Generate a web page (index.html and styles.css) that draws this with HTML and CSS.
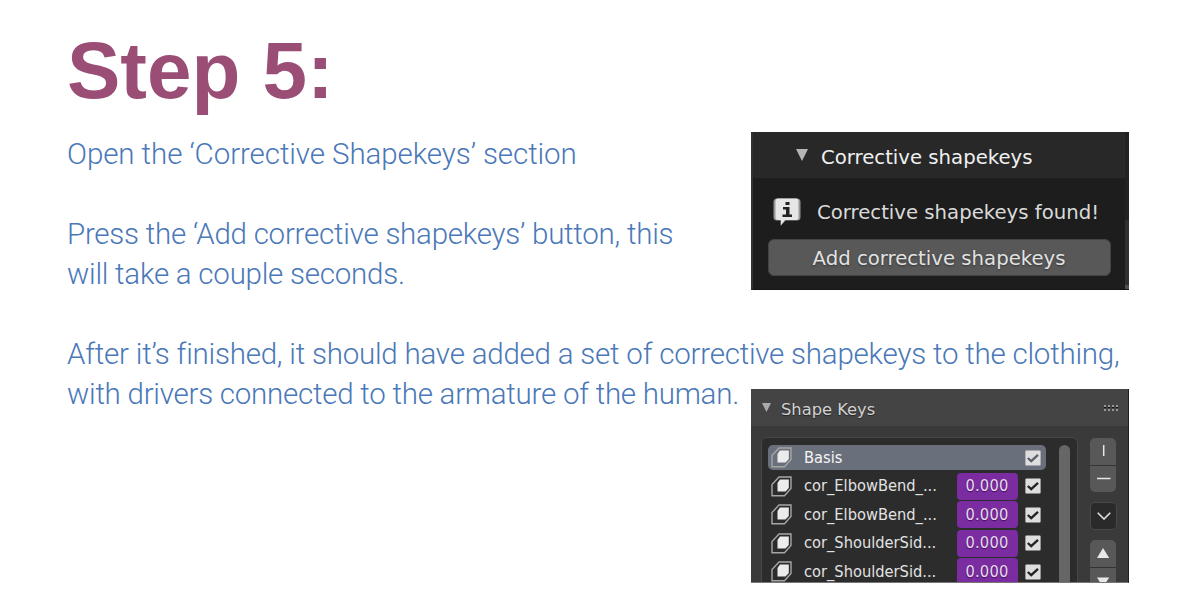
FILE: index.html
```
<!DOCTYPE html>
<html lang="en">
<head>
<meta charset="utf-8">
<title>Step 5</title>
<link rel="stylesheet" href="styles.css">
</head>
<body>
<svg class="defs" width="0" height="0" aria-hidden="true">
  <symbol id="key" viewBox="0 0 21 21"><path d="M1 19.800V8.500L8 1h12v11.500l-6.500 7.300z" fill="none" stroke="#a6a6a6" stroke-width="1.400"/><path d="M9 3.500h8.800v8.500L14.500 15.500H6.500V7z" fill="#ececec"/></symbol>
  <symbol id="check" viewBox="0 0 16 16"><rect x=".4" y=".4" width="15.200" height="15.200" rx="1" fill="#dedede"/><path d="M2.800 8l3.400 3.200L13 4.800" fill="none" stroke="currentColor" stroke-width="2.300"/></symbol>
</svg>
<main class="page">
  <section class="copy">
    <h1 class="title">Step 5:</h1>
    <p class="line l1">Open the ‘Corrective Shapekeys’ section</p>
    <p class="line l2 gap">Press the ‘Add corrective shapekeys’ button, this</p>
    <p class="line l3">will take a couple seconds.</p>
    <p class="line l4 gap">After it’s finished, it should have added a set of corrective shapekeys to the clothing,</p>
    <p class="line l5">with drivers connected to the armature of the human.</p>
  </section>
  <aside class="shots">
    <section class="corrective">
      <div class="corrective-main">
        <header class="corrective-head"><svg width="12" height="12"><path d="M0 0h12L6 12z" fill="#b4b4b4"/></svg><span>Corrective shapekeys</span></header>
        <div class="found">
          <svg width="28" height="29" viewBox="0 0 28 29"><path d="M4 .5h20q3.500 0 3.500 3.500v15q0 3.500-3.500 3.500H12.500L7.500 28v-5.500H4Q.5 22.500.5 19V4Q.5.500 4 .5z" fill="#969696"/><path d="M5 .5h18q2.500 0 2.500 3v16q0 2.500-2.500 2.500H12l-4 5V22H5q-2.500 0-2.500-2.500v-16q0-3 2.500-3z" fill="#e6e6e6"/><path d="M12.500 4h4v3h-4zM10 9h6.500v7.500H19V19H9.500v-2.500H13v-5h-3z" fill="#222"/></svg>
          <span>Corrective shapekeys found!</span>
        </div>
        <div class="add">Add corrective shapekeys</div>
      </div>
      <div class="edge"></div>
    </section>
    <section class="keys">
      <header class="keys-head"><svg width="9" height="9"><path d="M0 0h9L4.500 9z" fill="#aaa"/></svg><span>Shape Keys</span>
        <svg class="grip" width="14" height="6"><path d="M0 1h14M0 5h14" stroke="#b5b5b5" stroke-width="1.500" stroke-dasharray="2 2"/><path d="M0 2.500h14" stroke="#111" stroke-width="1" stroke-dasharray="2 2"/></svg>
      </header>
      <div class="keys-body">
        <div class="list">
          <div class="rows">
            <div class="row on"><svg class="k"><use href="#key"/></svg><span class="name">Basis</span><svg class="c"><use href="#check"/></svg></div>
            <div class="row"><svg class="k"><use href="#key"/></svg><span class="name">cor_ElbowBend_...</span><span class="val">0.000</span><svg class="c"><use href="#check"/></svg></div>
            <div class="row"><svg class="k"><use href="#key"/></svg><span class="name">cor_ElbowBend_...</span><span class="val">0.000</span><svg class="c"><use href="#check"/></svg></div>
            <div class="row"><svg class="k"><use href="#key"/></svg><span class="name">cor_ShoulderSid...</span><span class="val">0.000</span><svg class="c"><use href="#check"/></svg></div>
            <div class="row"><svg class="k"><use href="#key"/></svg><span class="name">cor_ShoulderSid...</span><span class="val">0.000</span><svg class="c"><use href="#check"/></svg></div>
          </div>
          <div class="scroll"></div>
        </div>
        <div class="tools">
          <div class="group">
            <div class="btn"><svg width="26" height="26"><path d="M13.700 7v11" stroke="#e6e6e6" stroke-width="1.500"/></svg></div>
            <div class="btn"><svg width="26" height="27"><path d="M7 12.500h13.500" stroke="#e6e6e6" stroke-width="1.500"/></svg></div>
          </div>
          <div class="drop"><svg width="14" height="8"><path d="M.7.700L7 7l6.300-6.300" fill="none" stroke="#e0e0e0" stroke-width="1.600"/></svg></div>
          <div class="group">
            <div class="btn"><svg width="26" height="26"><path d="M7 18L13 8l6.200 10z" fill="#e8e8e8"/></svg></div>
            <div class="btn"><svg width="26" height="27"><path d="M7 9.500h12.200L13 19z" fill="#e8e8e8"/></svg></div>
          </div>
        </div>
      </div>
    </section>
  </aside>
</main>
</body>
</html>
```
FILE: styles.css
```
*{box-sizing:border-box}
body{margin:0;background:#fff}
svg{display:block;flex:none}
.defs{position:absolute}
.page{width:1200px;height:600px;overflow:hidden;display:grid;grid-template-columns:751px 378px;grid-template-rows:600px}
.copy{grid-area:1/1/2/3;padding:26px 0 0 67px;color:#4a78b8;font:300 29.500px/40px Roboto,sans-serif}
.title{margin:0 0 18px;font:bold 80px/90px "Liberation Sans",sans-serif;color:#9b4e75}
.line{margin:0;margin-right:-40px;white-space:nowrap}
.gap{margin-top:40px}
.l1{letter-spacing:-.08px}
.l2,.l3{letter-spacing:-.24px}
.l4{letter-spacing:-.22px}
.l5{letter-spacing:-.25px}

.shots{grid-area:1/2/2/3;padding-top:132px;display:flex;flex-direction:column;gap:99px;font-family:"DejaVu Sans",sans-serif}
.corrective{height:158px;display:flex;background:#1d1d1d;border-left:2px solid #303236;border-bottom:1px solid #19131a;font-size:19.700px;line-height:24px}
.corrective-main{flex:1}
.edge{width:4px;background:linear-gradient(#222 0 88px,#303030 88px 153px,#505050 153px)}
.corrective-head{height:46px;padding:5px 0 0 43px;display:flex;align-items:center;gap:13px;background:#282828;color:#f0f0f0}
.corrective-head svg{margin-top:-5px}
.found{height:61px;padding:8px 0 0 20px;display:flex;align-items:center;gap:16px;color:#dadada}
.add{width:343px;height:37px;margin-left:15px;border:1px solid #444;border-radius:6px;background:#585858;color:#e2e2e2;display:flex;align-items:center;justify-content:center;text-shadow:0 1px 2px #333;padding:2px 1px 0 0}

.keys{height:194px;overflow:hidden;background:#3a3a3a;border-right:1px solid #202020;border-bottom:1px solid #777}
.keys-head{height:37px;padding:4px 10px 0 11px;display:flex;align-items:center;gap:10px;background:#444;color:#d2d2d2;font-size:16.300px;text-shadow:0 1px 1px #222}
.keys-head svg{margin-top:-4px}
.keys-head .grip{margin-left:auto}
.keys-body{display:flex;padding:11px 11px 0 10px;gap:12px}
.list{width:317px;height:170px;padding:7px 7px 0 6px;border:1px solid #474747;border-radius:6px;background:#2c2c2c;display:flex;justify-content:space-between}
.rows{width:278px}
.row{height:25px;margin-bottom:3.500px;padding:0 5px 0 3px;display:flex;align-items:center;color:#e2e2e2;font-family:"DejaVu Sans Condensed","DejaVu Sans",sans-serif;font-stretch:condensed;font-size:16.300px;line-height:20px;white-space:nowrap}
.on{background:#6a707b;border-radius:5px;color:#f5f5f5}
.k{width:21px;height:21px;margin-right:12px}
.c{width:16px;height:16px;color:#222}
.on .c{color:#5b606b}
.name{flex:1}
.val{width:61px;height:27px;margin-right:7px;border-radius:4px;background:#7a2ca0;color:#e8dced;display:flex;align-items:center;justify-content:center;letter-spacing:.25px;padding-right:1px;text-shadow:0 1px 1px #40105a}
.scroll{width:11px;height:170px;border-radius:6px;background:#666}
.tools{width:27px;padding-top:1px;display:flex;flex-direction:column;gap:10px}
.group{width:26px;height:54px;display:grid;gap:1px;border-radius:5px;overflow:hidden;background:#333}
.btn{height:27px;background:#585858}
.drop{height:28px;border:1px solid #484848;border-radius:5px;background:#2a2a2a;display:flex;align-items:center;justify-content:center}
```
